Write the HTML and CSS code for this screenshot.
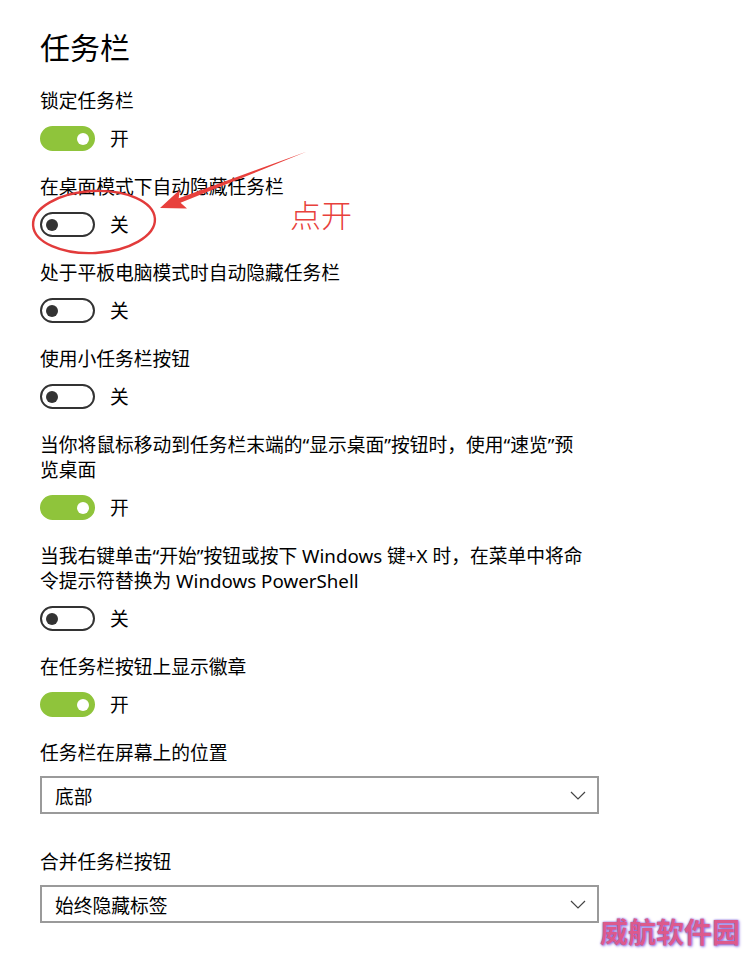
FILE: index.html
```html
<!DOCTYPE html>
<html lang="zh-CN">
<head>
    <meta charset="UTF-8">
    <title>任务栏</title>
    <link rel="stylesheet" href="styles.css">
</head>
<body>
    <div class="page">
        <h1 class="title">任务栏</h1>

        <div class="setting">
            <div class="label">锁定任务栏</div>
            <div class="switch-row">
                <span class="toggle on"><span class="knob"></span></span>
                <span class="state">开</span>
            </div>
        </div>

        <div class="setting">
            <div class="label">在桌面模式下自动隐藏任务栏</div>
            <div class="switch-row">
                <span class="toggle"><span class="knob"></span></span>
                <span class="state">关</span>
            </div>
        </div>

        <div class="setting">
            <div class="label">处于平板电脑模式时自动隐藏任务栏</div>
            <div class="switch-row">
                <span class="toggle"><span class="knob"></span></span>
                <span class="state">关</span>
            </div>
        </div>

        <div class="setting">
            <div class="label">使用小任务栏按钮</div>
            <div class="switch-row">
                <span class="toggle"><span class="knob"></span></span>
                <span class="state">关</span>
            </div>
        </div>

        <div class="setting">
            <div class="label">当你将鼠标移动到任务栏末端的“显示桌面”按钮时，使用“速览”预<br>览桌面</div>
            <div class="switch-row">
                <span class="toggle on"><span class="knob"></span></span>
                <span class="state">开</span>
            </div>
        </div>

        <div class="setting">
            <div class="label">当我右键单击“开始”按钮或按下 Windows 键+X 时，在菜单中将命<br>令提示符替换为 Windows PowerShell</div>
            <div class="switch-row">
                <span class="toggle"><span class="knob"></span></span>
                <span class="state">关</span>
            </div>
        </div>

        <div class="setting">
            <div class="label">在任务栏按钮上显示徽章</div>
            <div class="switch-row">
                <span class="toggle on"><span class="knob"></span></span>
                <span class="state">开</span>
            </div>
        </div>

        <div class="setting select-setting">
            <div class="label">任务栏在屏幕上的位置</div>
            <div class="select">
                <span>底部</span>
                <svg class="chevron" width="16" height="9" viewBox="0 0 16 9"><path d="M1 1 L8 8 L15 1" fill="none" stroke="#444" stroke-width="1.2"/></svg>
            </div>
        </div>

        <div class="setting select-setting">
            <div class="label">合并任务栏按钮</div>
            <div class="select">
                <span>始终隐藏标签</span>
                <svg class="chevron" width="16" height="9" viewBox="0 0 16 9"><path d="M1 1 L8 8 L15 1" fill="none" stroke="#444" stroke-width="1.2"/></svg>
            </div>
        </div>
    </div>

    <!-- hand-drawn annotation over the screenshot -->
    <svg class="marks" width="746" height="957" viewBox="0 0 746 957">
        <ellipse cx="94" cy="222" rx="61" ry="31" fill="none" stroke="#e23b3b" stroke-width="2.4" transform="rotate(-3 94 222)"/>
        <polygon points="160,208 179.8,189.8 178.7,198.2 307,151.5 180.5,202.8 187,208.4" fill="#e8403c"/>
    </svg>
    <span class="note">点开</span>
    <span class="watermark">威航软件园</span>
</body>
</html>
```

FILE: styles.css
```css
* {
    margin: 0;
    padding: 0;
    box-sizing: border-box;
}

body {
    position: relative;
    width: 746px;
    min-height: 957px;
    background: #fff;
    color: #000;
    font-family: "Noto Sans", "Noto Sans CJK SC", sans-serif;
    font-size: 18.75px;
}

.page {
    padding: 28px 0 0 40px;
}

.title {
    font-size: 30px;
    font-weight: normal;
    line-height: 40px;
    margin-bottom: 20px;
}

.setting {
    margin-bottom: 23px;
}

.label {
    line-height: 25px;
    white-space: nowrap;
}

.switch-row {
    display: flex;
    align-items: center;
    margin-top: 13px;
    height: 25px;
}

.toggle {
    display: flex;
    align-items: center;
    width: 55px;
    height: 25px;
    padding: 0 4px;
    border: 2.5px solid #333;
    border-radius: 13px;
}

.toggle .knob {
    width: 12px;
    height: 12px;
    border-radius: 50%;
    background: #333;
}

.toggle.on {
    justify-content: flex-end;
    background: #8fc43b;
    border-color: #8fc43b;
}

.toggle.on .knob {
    background: #fff;
}

.state {
    margin-left: 15px;
    line-height: 25px;
}

.select-setting {
    margin-bottom: 35px;
}

.select {
    display: flex;
    align-items: center;
    justify-content: space-between;
    width: 559px;
    height: 38px;
    margin-top: 11px;
    padding: 0 11px 0 13px;
    border: 2px solid #9a9a9a;
}

.marks {
    position: absolute;
    top: 0;
    left: 0;
    pointer-events: none;
}

.note {
    position: absolute;
    top: 198px;
    left: 290px;
    font-family: "Noto Sans CJK SC", sans-serif;
    font-size: 31px;
    line-height: 1;
    color: #e8413c;
    font-weight: 300;
}

.watermark {
    position: absolute;
    top: 917px;
    left: 600px;
    font-family: "Noto Sans CJK SC", sans-serif;
    font-size: 28px;
    font-weight: bold;
    line-height: 1;
    color: #dc5a8c;
    text-shadow: 0 0 2px #7b5fd6, 1px 1px 3px #8f74e0;
}
```
